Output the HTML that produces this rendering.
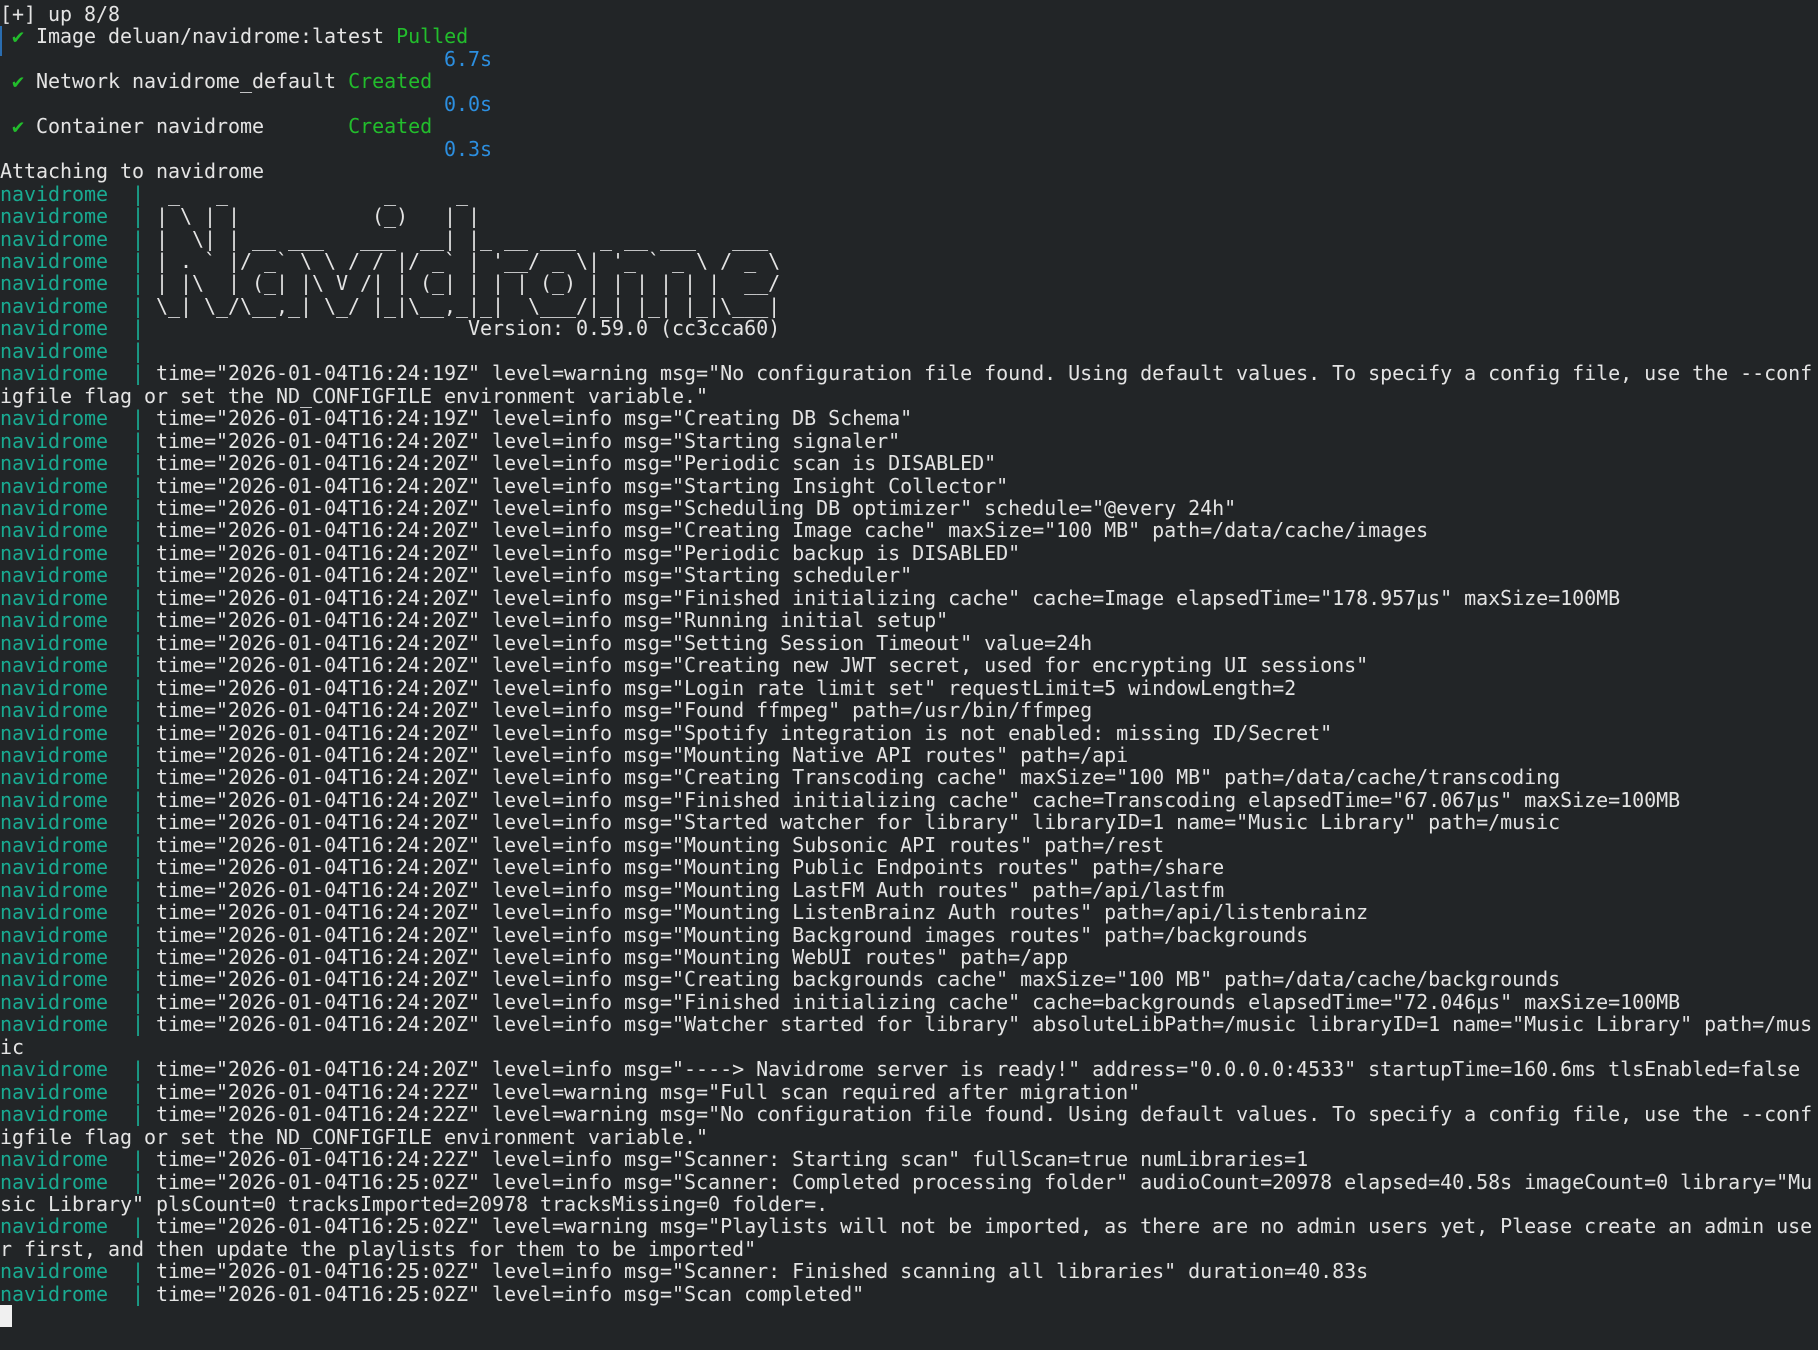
<!DOCTYPE html>
<html><head><meta charset="utf-8"><style>
html,body{margin:0;padding:0;background:#222527;width:1818px;height:1350px;overflow:hidden}
pre{margin:0;padding:3px 0 0 0;font-family:"DejaVu Sans Mono","Liberation Mono",monospace;font-size:20px;letter-spacing:-0.04px;line-height:22.45px;color:#e4e4e4;white-space:pre}
.n{color:#19ab92}.g{color:#22bd2c}.b{color:#2c8fe0}
.bar{position:absolute;left:0;top:26px;width:2px;height:30px;background:#2a6db0}
.cur{display:inline-block;width:12px;height:22px;background:#f0f0f0;vertical-align:top}
</style></head><body>
<div class="bar"></div>
<pre>[+] up 8/8
 <span class="g">✔</span> Image deluan/navidrome:latest <span class="g">Pulled</span>
                                     <span class="b">6.7s</span>
 <span class="g">✔</span> Network navidrome_default <span class="g">Created</span>
                                     <span class="b">0.0s</span>
 <span class="g">✔</span> Container navidrome       <span class="g">Created</span>
                                     <span class="b">0.3s</span>
Attaching to navidrome
<span class="n">navidrome  | </span> _   _             _     _
<span class="n">navidrome  | </span>| \ | |           (_)   | |
<span class="n">navidrome  | </span>|  \| | __ ___   ___  __| |_ __ ___  _ __ ___   ___
<span class="n">navidrome  | </span>| . ` |/ _` \ \ / / |/ _` | '__/ _ \| '_ ` _ \ / _ \
<span class="n">navidrome  | </span>| |\  | (_| |\ V /| | (_| | | | (_) | | | | | |  __/
<span class="n">navidrome  | </span>\_| \_/\__,_| \_/ |_|\__,_|_|  \___/|_| |_| |_|\___|
<span class="n">navidrome  | </span>                          Version: 0.59.0 (cc3cca60)
<span class="n">navidrome  | </span>
<span class="n">navidrome  | </span>time="2026-01-04T16:24:19Z" level=warning msg="No configuration file found. Using default values. To specify a config file, use the --conf
igfile flag or set the ND_CONFIGFILE environment variable."
<span class="n">navidrome  | </span>time="2026-01-04T16:24:19Z" level=info msg="Creating DB Schema"
<span class="n">navidrome  | </span>time="2026-01-04T16:24:20Z" level=info msg="Starting signaler"
<span class="n">navidrome  | </span>time="2026-01-04T16:24:20Z" level=info msg="Periodic scan is DISABLED"
<span class="n">navidrome  | </span>time="2026-01-04T16:24:20Z" level=info msg="Starting Insight Collector"
<span class="n">navidrome  | </span>time="2026-01-04T16:24:20Z" level=info msg="Scheduling DB optimizer" schedule="@every 24h"
<span class="n">navidrome  | </span>time="2026-01-04T16:24:20Z" level=info msg="Creating Image cache" maxSize="100 MB" path=/data/cache/images
<span class="n">navidrome  | </span>time="2026-01-04T16:24:20Z" level=info msg="Periodic backup is DISABLED"
<span class="n">navidrome  | </span>time="2026-01-04T16:24:20Z" level=info msg="Starting scheduler"
<span class="n">navidrome  | </span>time="2026-01-04T16:24:20Z" level=info msg="Finished initializing cache" cache=Image elapsedTime="178.957µs" maxSize=100MB
<span class="n">navidrome  | </span>time="2026-01-04T16:24:20Z" level=info msg="Running initial setup"
<span class="n">navidrome  | </span>time="2026-01-04T16:24:20Z" level=info msg="Setting Session Timeout" value=24h
<span class="n">navidrome  | </span>time="2026-01-04T16:24:20Z" level=info msg="Creating new JWT secret, used for encrypting UI sessions"
<span class="n">navidrome  | </span>time="2026-01-04T16:24:20Z" level=info msg="Login rate limit set" requestLimit=5 windowLength=2
<span class="n">navidrome  | </span>time="2026-01-04T16:24:20Z" level=info msg="Found ffmpeg" path=/usr/bin/ffmpeg
<span class="n">navidrome  | </span>time="2026-01-04T16:24:20Z" level=info msg="Spotify integration is not enabled: missing ID/Secret"
<span class="n">navidrome  | </span>time="2026-01-04T16:24:20Z" level=info msg="Mounting Native API routes" path=/api
<span class="n">navidrome  | </span>time="2026-01-04T16:24:20Z" level=info msg="Creating Transcoding cache" maxSize="100 MB" path=/data/cache/transcoding
<span class="n">navidrome  | </span>time="2026-01-04T16:24:20Z" level=info msg="Finished initializing cache" cache=Transcoding elapsedTime="67.067µs" maxSize=100MB
<span class="n">navidrome  | </span>time="2026-01-04T16:24:20Z" level=info msg="Started watcher for library" libraryID=1 name="Music Library" path=/music
<span class="n">navidrome  | </span>time="2026-01-04T16:24:20Z" level=info msg="Mounting Subsonic API routes" path=/rest
<span class="n">navidrome  | </span>time="2026-01-04T16:24:20Z" level=info msg="Mounting Public Endpoints routes" path=/share
<span class="n">navidrome  | </span>time="2026-01-04T16:24:20Z" level=info msg="Mounting LastFM Auth routes" path=/api/lastfm
<span class="n">navidrome  | </span>time="2026-01-04T16:24:20Z" level=info msg="Mounting ListenBrainz Auth routes" path=/api/listenbrainz
<span class="n">navidrome  | </span>time="2026-01-04T16:24:20Z" level=info msg="Mounting Background images routes" path=/backgrounds
<span class="n">navidrome  | </span>time="2026-01-04T16:24:20Z" level=info msg="Mounting WebUI routes" path=/app
<span class="n">navidrome  | </span>time="2026-01-04T16:24:20Z" level=info msg="Creating backgrounds cache" maxSize="100 MB" path=/data/cache/backgrounds
<span class="n">navidrome  | </span>time="2026-01-04T16:24:20Z" level=info msg="Finished initializing cache" cache=backgrounds elapsedTime="72.046µs" maxSize=100MB
<span class="n">navidrome  | </span>time="2026-01-04T16:24:20Z" level=info msg="Watcher started for library" absoluteLibPath=/music libraryID=1 name="Music Library" path=/mus
ic
<span class="n">navidrome  | </span>time="2026-01-04T16:24:20Z" level=info msg="----&gt; Navidrome server is ready!" address="0.0.0.0:4533" startupTime=160.6ms tlsEnabled=false
<span class="n">navidrome  | </span>time="2026-01-04T16:24:22Z" level=warning msg="Full scan required after migration"
<span class="n">navidrome  | </span>time="2026-01-04T16:24:22Z" level=warning msg="No configuration file found. Using default values. To specify a config file, use the --conf
igfile flag or set the ND_CONFIGFILE environment variable."
<span class="n">navidrome  | </span>time="2026-01-04T16:24:22Z" level=info msg="Scanner: Starting scan" fullScan=true numLibraries=1
<span class="n">navidrome  | </span>time="2026-01-04T16:25:02Z" level=info msg="Scanner: Completed processing folder" audioCount=20978 elapsed=40.58s imageCount=0 library="Mu
sic Library" plsCount=0 tracksImported=20978 tracksMissing=0 folder=.
<span class="n">navidrome  | </span>time="2026-01-04T16:25:02Z" level=warning msg="Playlists will not be imported, as there are no admin users yet, Please create an admin use
r first, and then update the playlists for them to be imported"
<span class="n">navidrome  | </span>time="2026-01-04T16:25:02Z" level=info msg="Scanner: Finished scanning all libraries" duration=40.83s
<span class="n">navidrome  | </span>time="2026-01-04T16:25:02Z" level=info msg="Scan completed"
<span class="cur"></span></pre>
</body></html>
